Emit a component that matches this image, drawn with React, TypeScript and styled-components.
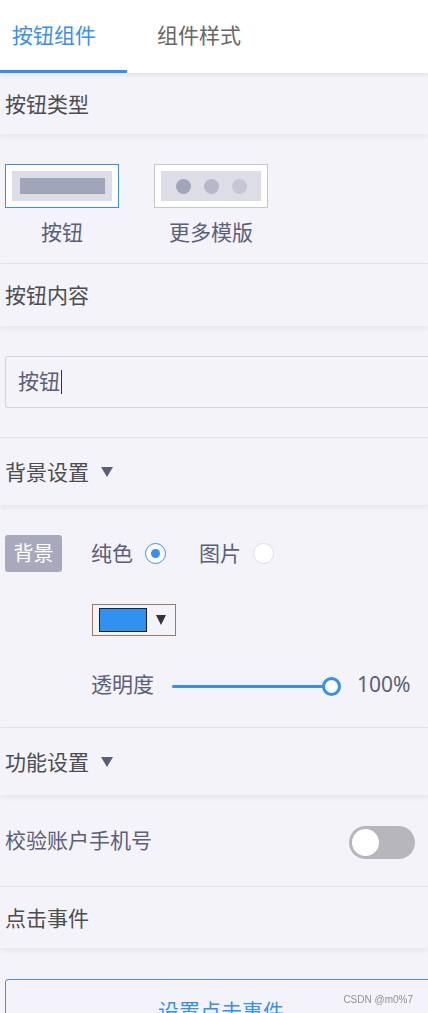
import React from 'react'
import styled, { createGlobalStyle } from 'styled-components'

const GlobalStyle = createGlobalStyle`
  html, body {
    margin: 0;
    padding: 0;
    overflow-x: hidden;
    background: #f4f3f9;
    font-family: "Noto Sans", "Noto Sans CJK SC", sans-serif;
  }
`

const BLUE = '#3890ee'
const LABEL = '#5b5f78'

const Page = styled.div`
  width: 428px;
  min-height: 1013px;
  background: #f4f3f9;
`

const TabBar = styled.div`
  position: relative;
  z-index: 2;
  display: flex;
  height: 73px;
  background: #fff;
  box-shadow: 0 2px 4px rgba(0, 0, 0, 0.08);
`

const Tab = styled.div<{ $active?: boolean; $width?: number; $left: number }>`
  box-sizing: border-box;
  display: flex;
  align-items: center;
  width: ${(p) => (p.$width ? `${p.$width}px` : 'auto')};
  padding-left: ${(p) => p.$left}px;
  padding-bottom: 2px;
  font-size: 21px;
  color: ${(p) => (p.$active ? BLUE : '#666')};
  border-bottom: 3px solid ${(p) => (p.$active ? BLUE : 'transparent')};
`

const SectionHeader = styled.div<{ $height: number; $divided?: boolean }>`
  position: relative;
  z-index: 1;
  box-sizing: border-box;
  display: flex;
  align-items: center;
  gap: 12px;
  height: ${(p) => p.$height}px;
  padding: 0 0 2px 5px;
  font-size: 21px;
  color: #4c4c52;
  border-top: ${(p) => (p.$divided ? '1px solid #e3e2ea' : 'none')};
  box-shadow: 0 3px 5px rgba(0, 0, 0, 0.05);
`

const Caret = styled.span`
  width: 0;
  height: 0;
  margin-top: 2px;
  border-left: 6px solid transparent;
  border-right: 6px solid transparent;
  border-top: 10px solid #5a5e78;
`

const TemplateBlock = styled.div`
  display: flex;
  gap: 35px;
  height: 129px;
  box-sizing: border-box;
  padding: 30px 0 0 5px;
`

const TemplateItem = styled.div`
  display: flex;
  flex-direction: column;
  align-items: center;
  gap: 10px;
`

const TemplateCard = styled.div<{ $selected?: boolean }>`
  box-sizing: border-box;
  width: 114px;
  height: 44px;
  padding: 6px;
  background: #fff;
  border: 1px solid ${(p) => (p.$selected ? BLUE : '#c6c6d2')};
`

const CardInner = styled.div`
  display: flex;
  align-items: center;
  justify-content: center;
  gap: 13px;
  height: 100%;
  background: #dddde7;
`

const Bar = styled.div`
  width: 85px;
  height: 16px;
  background: #a0a5b9;
`

const Dot = styled.div<{ $color: string }>`
  width: 15px;
  height: 15px;
  border-radius: 50%;
  background: ${(p) => p.$color};
`

const TemplateLabel = styled.div`
  font-size: 21px;
  line-height: 28px;
  color: ${LABEL};
`

const InputBlock = styled.div`
  box-sizing: border-box;
  height: 111px;
  padding: 30px 0 0 5px;
`

const InputBox = styled.div`
  box-sizing: border-box;
  display: flex;
  align-items: center;
  width: 440px;
  height: 52px;
  padding-left: 12px;
  border: 1px solid #d3d3d9;
  border-radius: 2px;
  font-size: 21px;
  line-height: 1.2;
  color: ${LABEL};
`

const TextCursor = styled.span`
  width: 1px;
  height: 24px;
  margin-left: 1px;
  background: #333;
`

const BgBlock = styled.div`
  display: grid;
  grid-template-columns: 57px 1fr;
  grid-auto-rows: auto;
  align-content: start;
  align-items: start;
  column-gap: 29px;
  box-sizing: border-box;
  height: 222px;
  padding: 30px 0 0 5px;
`

const Badge = styled.div`
  display: flex;
  align-items: center;
  justify-content: center;
  height: 37px;
  border-radius: 3px;
  background: #a9a9bd;
  color: #fff;
  font-size: 20px;
  line-height: 1;
`

const RadioGroup = styled.div`
  display: flex;
  align-items: center;
  height: 37px;
`

const RadioLabel = styled.span`
  font-size: 21px;
  line-height: 1.2;
  color: ${LABEL};
  margin-right: 12px;
`

const Radio = styled.span<{ $checked?: boolean }>`
  box-sizing: border-box;
  display: flex;
  align-items: center;
  justify-content: center;
  width: 21px;
  height: 21px;
  margin-right: 33px;
  border-radius: 50%;
  background: #fff;
  border: 1px solid ${(p) => (p.$checked ? BLUE : '#dcdce2')};

  &::after {
    content: '';
    display: ${(p) => (p.$checked ? 'block' : 'none')};
    width: 9px;
    height: 9px;
    border-radius: 50%;
    background: ${BLUE};
  }
`

const PickerCell = styled.div`
  grid-column: 2;
  padding-top: 32px;
  margin-left: 1px;
`

const ColorPicker = styled.div`
  box-sizing: border-box;
  display: flex;
  align-items: center;
  gap: 9px;
  width: 84px;
  height: 32px;
  padding-left: 6px;
  border: 1px solid #9a7b66;
`

const Swatch = styled.div<{ $color: string }>`
  box-sizing: border-box;
  width: 48px;
  height: 24px;
  border: 1px solid #222;
  background: ${(p) => p.$color};
`

const PickerArrow = styled.span`
  width: 0;
  height: 0;
  border-left: 5px solid transparent;
  border-right: 5px solid transparent;
  border-top: 10px solid #333;
`

const SliderRow = styled.div`
  grid-column: 2;
  display: flex;
  align-items: center;
  margin-top: 34px;
  height: 30px;
  font-size: 21px;
  line-height: 1.2;
  color: ${LABEL};
`

const SliderTrack = styled.div`
  position: relative;
  width: 160px;
  height: 3px;
  margin: 2px 25px 0 18px;
  background: ${BLUE};
  border-radius: 2px;
`

const SliderThumb = styled.span`
  position: absolute;
  right: -9px;
  top: -8px;
  box-sizing: border-box;
  width: 19px;
  height: 19px;
  border-radius: 50%;
  background: #fff;
  border: 3px solid ${BLUE};
`

const ToggleRow = styled.div`
  box-sizing: border-box;
  display: flex;
  align-items: center;
  justify-content: space-between;
  height: 91px;
  padding: 0 13px 0 5px;
  font-size: 21px;
  line-height: 1.2;
  color: ${LABEL};
`

const Switch = styled.div<{ $on?: boolean }>`
  box-sizing: border-box;
  display: flex;
  align-items: center;
  justify-content: ${(p) => (p.$on ? 'flex-end' : 'flex-start')};
  width: 66px;
  height: 33px;
  margin-top: 3px;
  padding: 0 3px;
  border-radius: 17px;
  background: ${(p) => (p.$on ? BLUE : '#b7b6bc')};
`

const Knob = styled.span`
  width: 27px;
  height: 27px;
  border-radius: 50%;
  background: #fff;
`

const ButtonBlock = styled.div`
  padding: 31px 0 0 5px;
`

const ActionButton = styled.div`
  box-sizing: border-box;
  display: flex;
  align-items: center;
  justify-content: center;
  width: 432px;
  height: 62px;
  border: 1px solid #4a8fdf;
  border-radius: 3px;
  color: ${BLUE};
  font-size: 21px;
`

const Watermark = styled.div`
  position: fixed;
  right: 15px;
  bottom: 8px;
  font-family: "Liberation Sans", Arial, sans-serif;
  font-size: 10px;
  color: rgba(120, 120, 120, 0.8);
`

const App: React.FC = () => {
  return (
    <Page>
      <GlobalStyle />
      <TabBar>
        <Tab $active $width={127} $left={12}>按钮组件</Tab>
        <Tab $left={30}>组件样式</Tab>
      </TabBar>

      <SectionHeader $height={61}>按钮类型</SectionHeader>
      <TemplateBlock>
        <TemplateItem>
          <TemplateCard $selected>
            <CardInner>
              <Bar />
            </CardInner>
          </TemplateCard>
          <TemplateLabel>按钮</TemplateLabel>
        </TemplateItem>
        <TemplateItem>
          <TemplateCard>
            <CardInner>
              <Dot $color="#a0a5b9" />
              <Dot $color="#b6b8ca" />
              <Dot $color="#c6c7d5" />
            </CardInner>
          </TemplateCard>
          <TemplateLabel>更多模版</TemplateLabel>
        </TemplateItem>
      </TemplateBlock>

      <SectionHeader $height={63} $divided>按钮内容</SectionHeader>
      <InputBlock>
        <InputBox>
          按钮
          <TextCursor />
        </InputBox>
      </InputBlock>

      <SectionHeader $height={68} $divided>
        背景设置
        <Caret />
      </SectionHeader>
      <BgBlock>
        <Badge>背景</Badge>
        <RadioGroup>
          <RadioLabel>纯色</RadioLabel>
          <Radio $checked />
          <RadioLabel>图片</RadioLabel>
          <Radio />
        </RadioGroup>
        <PickerCell>
          <ColorPicker>
            <Swatch $color="#3191f0" />
            <PickerArrow />
          </ColorPicker>
        </PickerCell>
        <SliderRow>
          透明度
          <SliderTrack>
            <SliderThumb />
          </SliderTrack>
          100%
        </SliderRow>
      </BgBlock>

      <SectionHeader $height={68} $divided>
        功能设置
        <Caret />
      </SectionHeader>
      <ToggleRow>
        校验账户手机号
        <Switch>
          <Knob />
        </Switch>
      </ToggleRow>

      <SectionHeader $height={62} $divided>点击事件</SectionHeader>
      <ButtonBlock>
        <ActionButton>设置点击事件</ActionButton>
      </ButtonBlock>

      <Watermark>CSDN @m0%7</Watermark>
    </Page>
  )
}

export default App
